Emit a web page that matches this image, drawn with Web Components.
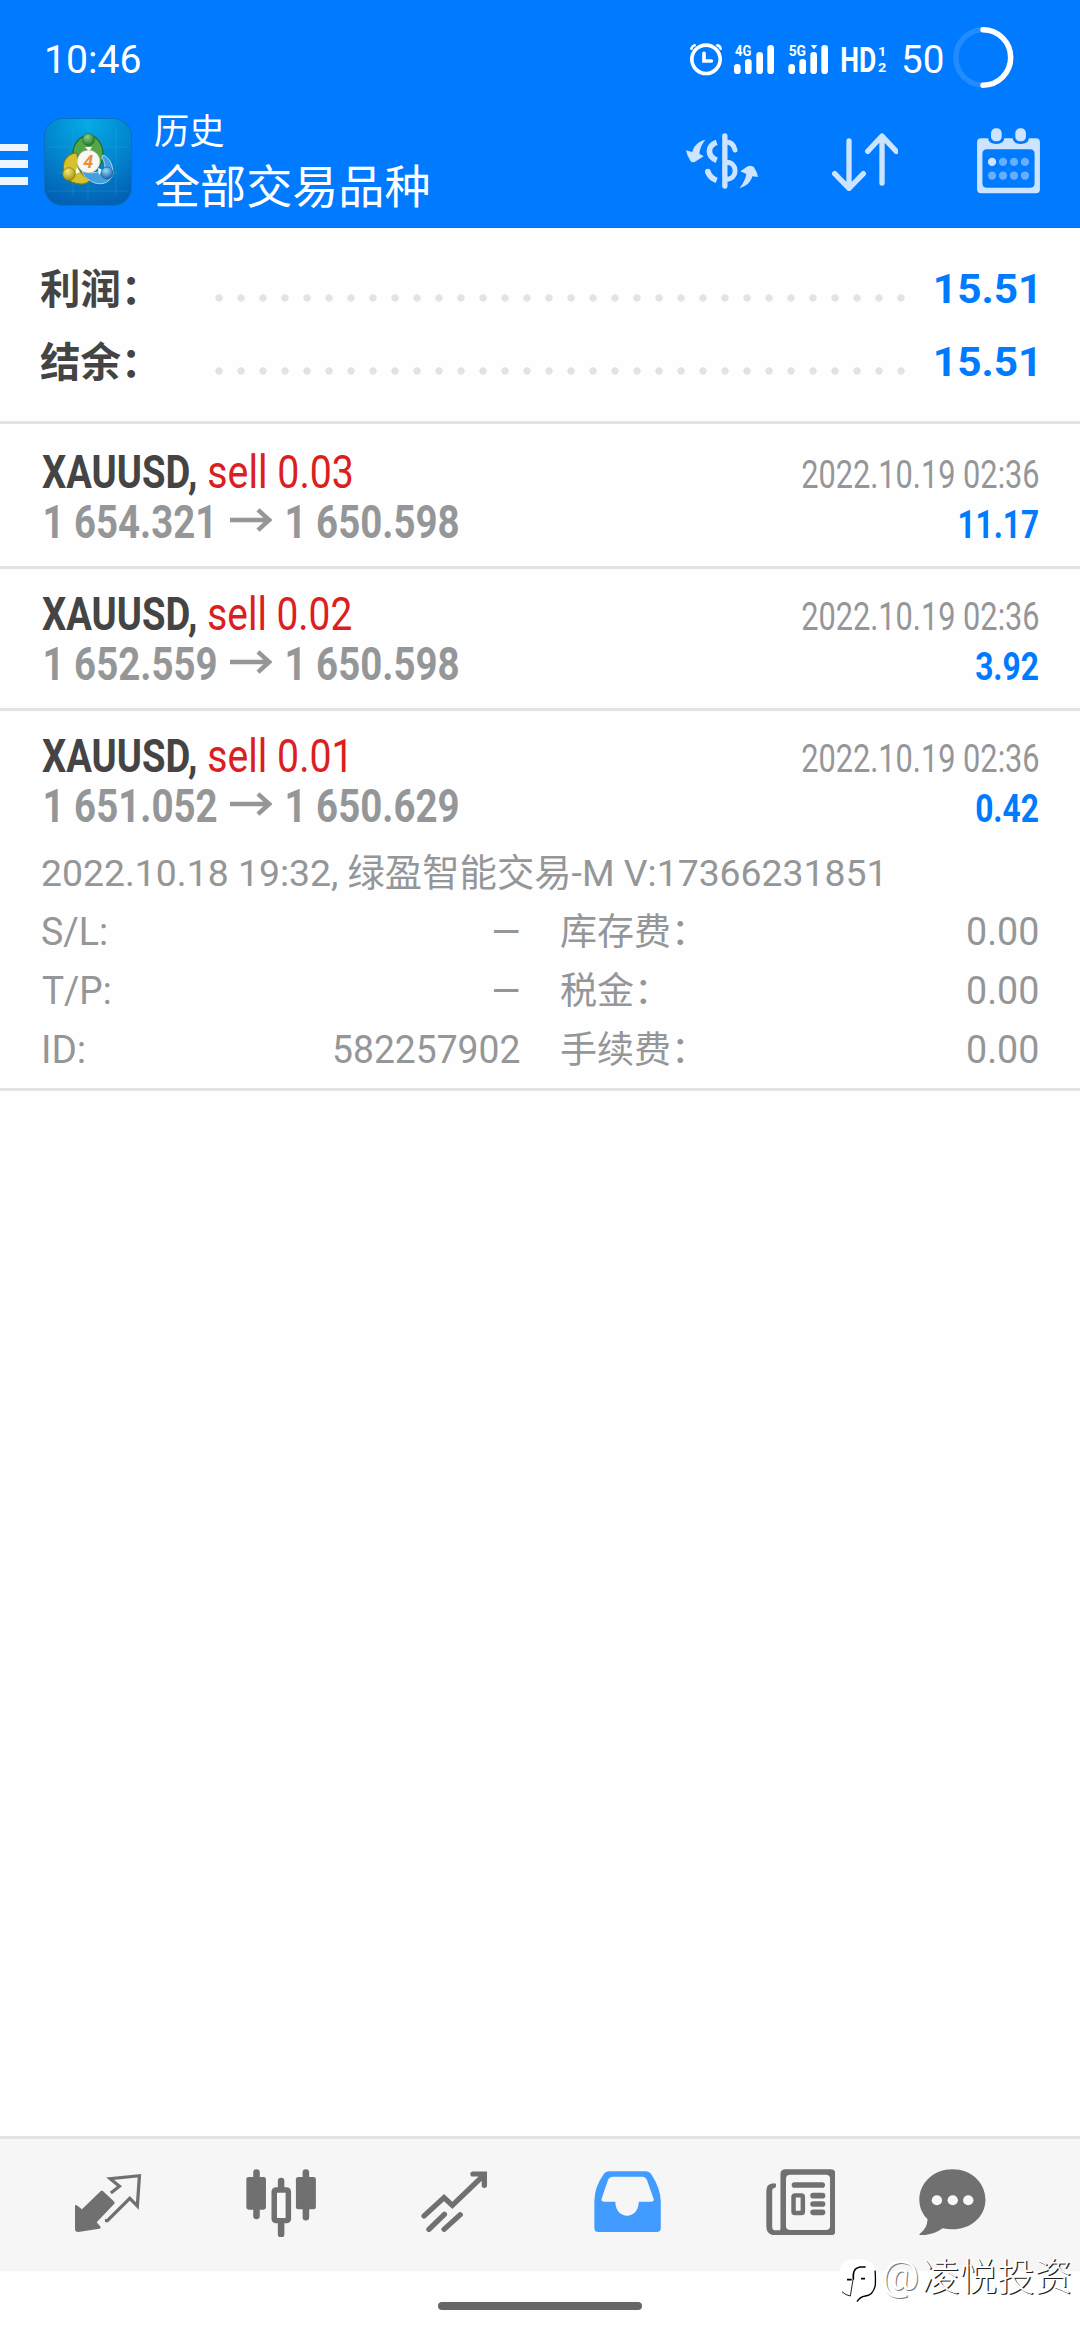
<!DOCTYPE html>
<html lang="zh-CN">
<head>
<meta charset="utf-8">
<title>历史</title>
<style>
html,body{margin:0;padding:0;background:#fefefe}
body{width:1080px;height:2340px;overflow:hidden;font-family:Roboto,"Noto Sans CJK SC",sans-serif}
</style>
</head>
<body>
<history-app></history-app>
<script>
const FAMILY = 'Roboto,"Noto Sans CJK SC",sans-serif';
const ctx = document.createElement('canvas').getContext('2d');

/* One line of text whose inked width is `w` and whose baseline sits `base` px below the box top. */
class FitText extends HTMLElement {
  connectedCallback() {
    if (this.shadowRoot) return;
    const a = n => this.getAttribute(n);
    const size = +a('size'), w = +a('w'), base = +a('base'), h = +a('h'), weight = a('weight') || 400;
    const root = this.attachShadow({mode:'open'});
    root.innerHTML = `<style>
      :host{display:block;flex:none;width:${w}px;height:${h}px}
      div{white-space:pre;font:${weight} ${size}px/${h}px ${FAMILY};width:max-content;transform-origin:0 0}
      i{display:inline-block;width:0;height:0}
    </style><div><slot></slot><i></i></div>`;
    ctx.font = `${weight} ${size}px ${FAMILY}`;
    const m = ctx.measureText(this.textContent);
    const s = w / (m.actualBoundingBoxRight + m.actualBoundingBoxLeft);
    const div = root.querySelector('div');
    const at = root.querySelector('i').getBoundingClientRect().bottom - this.getBoundingClientRect().top;
    div.style.transform = `translate(${m.actualBoundingBoxLeft * s}px,${base - at}px) scaleX(${s})`;
  }
}

class StatusBar extends HTMLElement {
  connectedCallback() {
    this.attachShadow({mode:'open'}).innerHTML = `<style>
      :host{display:flex;height:88px;padding-left:47px;color:#fff;box-sizing:border-box}
      svg{display:block;flex:none;overflow:visible}
      .net{margin:43px 0 0 550px}.pct{margin-left:15.5px}.ring{margin:27px 0 0 10.5px}
    </style>
    <fit-text size="38" w="93" h="88" base="73">10:46</fit-text>
    <svg class="net" width="197" height="33" viewBox="90 129 591 99" fill="#fff">
      <g fill="none" stroke="#fff" stroke-linecap="round">
        <circle cx="138" cy="178" r="42.5" stroke-width="11"/>
        <path d="M132 160V183H154" stroke-width="11"/>
        <path d="M94 146Q97 138 104 136M172 136Q180 138 182 146" stroke-width="8"/>
      </g>
      <text x="225" y="168" font-family="Roboto" font-weight="700" font-size="44" textLength="49" lengthAdjust="spacingAndGlyphs">4G</text>
      <g stroke="#fff" stroke-width="20" stroke-linecap="round">
        <path d="M232 202V212M265 187V212M299 166V212M332 145V212M395 202V212M428 187V212M461 166V212M494 145V212"/>
      </g>
      <text x="386" y="168" font-family="Roboto" font-weight="700" font-size="44" textLength="52" lengthAdjust="spacingAndGlyphs">5G</text>
      <path d="M452 135H472L462 148Z"/>
      <text x="541" y="216" font-family="Roboto" font-weight="700" font-size="105" textLength="108" lengthAdjust="spacingAndGlyphs">HD</text>
      <text x="654" y="167" font-family="Roboto" font-weight="700" font-size="39" textLength="25" lengthAdjust="spacingAndGlyphs">1</text>
      <text x="654" y="216" font-family="Roboto" font-weight="700" font-size="39" textLength="25" lengthAdjust="spacingAndGlyphs">2</text>
    </svg>
    <fit-text class="pct" size="38" w="40" h="88" base="73">50</fit-text>
    <svg class="ring" width="61" height="61" viewBox="0 0 61 61" fill="none" stroke="#fff" stroke-width="5.5">
      <path d="M30.5 2.8A27.7 27.7 0 0 0 30.5 58.2" stroke-opacity=".13"/>
      <path d="M30 2.8A27.7 27.7 0 0 1 30 58.2" stroke-linecap="round"/>
    </svg>`;
  }
}

class ToolBar extends HTMLElement {
  connectedCallback() {
    this.attachShadow({mode:'open'}).innerHTML = `<style>
      :host{display:flex;height:140px;box-sizing:border-box;border-bottom:1px solid #0a70e0;color:#fff}
      svg{display:block;flex:none}
      .menu{display:flex;flex-direction:column;gap:9px;margin:55.5px 16.5px 0 0}
      .menu b{width:27.5px;height:7.7px;background:#ebf4ff}
      .logo{margin:30px 23px 0 0}
      .titles{flex:none;width:531px;padding-top:20px;box-sizing:border-box}
      .d{margin-top:44.5px}.s{margin:44.5px 0 0 73.5px}.c{margin:40px 0 0 78.5px}
    </style>
    <div class="menu"><b></b><b></b><b></b></div>
    <svg class="logo" width="88" height="88" viewBox="0 0 88 88">
      <defs>
        <radialGradient id="bg" cx=".5" cy=".05" r=".95"><stop offset="0" stop-color="#05abe6"/><stop offset=".5" stop-color="#0288cf"/><stop offset="1" stop-color="#0361b4"/></radialGradient>
        <radialGradient id="g" cx=".4" cy=".3" r=".7"><stop offset="0" stop-color="#8fd08a"/><stop offset="1" stop-color="#217a2c"/></radialGradient>
        <radialGradient id="y" cx=".4" cy=".3" r=".7"><stop offset="0" stop-color="#f3ea74"/><stop offset="1" stop-color="#a89410"/></radialGradient>
        <radialGradient id="u" cx=".4" cy=".3" r=".7"><stop offset="0" stop-color="#9fd8fa"/><stop offset="1" stop-color="#1667b0"/></radialGradient>
      </defs>
      <rect x=".5" y=".5" width="87" height="87" rx="18" fill="url(#bg)" stroke="#0a6fc0" stroke-width="1"/>
      <path d="M29 10V78M72 10V78M4 29H84M4 73H84M14 55H74M44 4V84" stroke="#5cc4f4" stroke-opacity=".22" stroke-width=".8"/>
      <path d="M44 18C51 16 59 25 59 36C59 44 57 48 53 50L49 38L44 30L39 37H29C28 26 37 17 44 18Z" fill="#56a648" stroke="#1d6b2a" stroke-width="1.2"/>
      <path d="M33 35L34 44C33 50 37 57 46 62C43 67 35 67 28 64C20 60 17 50 21 42C24 37 28 35 33 35Z" fill="#d5c22d" stroke="#857a0e" stroke-width="1.2"/>
      <path d="M59 37C66 40 69 47 69 56C66 65 58 67 51 65C44 62 39 58 38 53L48 55L60 53C62 48 60 42 58 40Z" fill="#459fdd" stroke="#a5d5f4" stroke-width="1"/>
      <path d="M41 29H48L45 34ZM33 49L36 54L31 56ZM54 50L59 52L55 57Z" fill="#fff"/>
      <circle cx="44.500" cy="21.500" r="6" fill="url(#g)" stroke="#246d2b" stroke-width=".7"/>
      <circle cx="25" cy="56" r="6.300" fill="url(#y)" stroke="#82740e" stroke-width=".7"/>
      <circle cx="63" cy="55" r="6" fill="url(#u)" stroke="#185d9c" stroke-width=".7"/>
      <circle cx="44.500" cy="43.500" r="11.300" fill="#f8f7f3" stroke="#c7c7c0" stroke-width=".6"/>
      <text x="44.300" y="50" text-anchor="middle" font-family="Roboto" font-weight="700" font-style="italic" font-size="18" fill="#ee8c36">4</text>
    </svg>
    <div class="titles">
      <fit-text size="35" w="68.500" h="50" base="35.800">历史</fit-text>
      <fit-text size="46" w="273.500" h="55" base="45.300">全部交易品种</fit-text>
    </div>
    <svg class="d" width="72" height="56" viewBox="18 22 216 168" fill="none" stroke="#cce4ff">
      <path d="M134.500 31V181" stroke-width="16" stroke-linecap="round"/>
      <path d="M140 49Q160 50 165 73" stroke-width="15" stroke-linecap="round"/>
      <path d="M139 110C174 110 174 161 139 161" stroke-width="15"/>
      <path d="M110 50C81 60 81 92 110 104" stroke-width="17"/>
      <path d="M84 139Q90 157 110 164" stroke-width="17"/>
      <circle cx="83.500" cy="138" r="8.500" fill="#cce4ff" stroke="none"/>
      <path d="M76 42C66 54 59 70 58 84L71 92L44 109Q35 112 31 105Q20 88 18 74L37 79C41 61 55 46 76 42ZM178 188C190 174 196 160 199 145L181 137L203 122Q216 117 222 125Q232 140 234 154L217 152C212 170 200 181 178 188Z" fill="#cce4ff" stroke="none"/>
    </svg>
    <svg class="s" width="66.700" height="58" viewBox="515 397 200 174" fill="none" stroke="#cce4ff" stroke-width="16" stroke-linecap="round" stroke-linejoin="round">
      <path d="M566 421V561M523 519L566 563L609 519M665 547V408M622 452L665 406L708 452"/>
    </svg>
    <svg class="c" width="63" height="65.500" viewBox="951 383 189 197">
      <path fill="#cce4ff" fill-rule="evenodd" d="M963 414H984Q986 431 1009 431Q1031 431 1033 414H1058Q1060 431 1083 431Q1105 431 1107 414H1128Q1140 414 1140 426V567Q1140 579 1128 579H963Q951 579 951 567V426Q951 414 963 414ZM981 447Q967 447 967 461V549Q967 563 981 563H1110Q1124 563 1124 549V461Q1124 447 1110 447Z"/>
      <rect x="993" y="384" width="32" height="39" rx="14" fill="#cce4ff"/><rect x="1066" y="384" width="32" height="39" rx="14" fill="#cce4ff"/>
      <circle cx="996" cy="485" r="12.500" fill="#cce4ff"/>
      <g fill="#66afff"><circle cx="1029" cy="485" r="12.500"/><circle cx="1062" cy="485" r="12.500"/><circle cx="1095" cy="485" r="12.500"/><circle cx="996" cy="526" r="12.500"/><circle cx="1029" cy="526" r="12.500"/><circle cx="1062" cy="526" r="12.500"/><circle cx="1095" cy="526" r="12.500"/></g>
    </svg>`;
  }
}

class SummaryRow extends HTMLElement {
  connectedCallback() {
    const a = n => this.getAttribute(n);
    this.attachShadow({mode:'open'}).innerHTML = `<style>
      :host{display:flex;height:73px;padding-left:40px;color:#444}
      .dots{flex:none;width:704px;height:8px;margin:37.700px 0 0 72.700px;background:radial-gradient(circle at 11px 4px,#e3e3e3 3.400px,transparent 4px) 0 0/22px 8px repeat-x}
      .v{color:#007aff;margin-left:23.600px}
    </style>
    <fit-text size="41" weight="700" w="95.700" h="73" base="47.500">${a('label')}</fit-text>
    <div class="dots"></div>
    <fit-text class="v" size="40" weight="700" w="99" h="73" base="47">${a('value')}</fit-text>`;
  }
}

class TradeItem extends HTMLElement {
  connectedCallback() {
    const a = n => this.getAttribute(n);
    this.attachShadow({mode:'open'}).innerHTML = `<style>
      :host{display:block;border-bottom:3px solid #e3e3e3;color:#949698}
      .head{height:139px;box-sizing:border-box;padding:20px 41.500px 0 42px;display:flex;flex-direction:column}
      .r{display:flex;height:50px}
      .sym{color:#444}.side{color:#db1f1f;margin-left:13px}
      .end{margin-left:auto}.profit{color:#007aff}
      .open{margin-left:2.800px}
      .ar{width:42.300px;height:24px;flex:none;margin:11px 0 0 ${185 - a('ow')}px}
      .close{margin-left:15.300px}
    </style>
    <div class="head">
      <div class="r"><fit-text class="sym" size="46" weight="700" w="153.500" h="50" base="40.700">XAUUSD,</fit-text>
        <fit-text class="side" size="46" w="${a('sw')}" h="50" base="40.700">sell ${a('lots')}</fit-text>
        <fit-text class="end" size="38" w="236.500" h="50" base="40.700">2022.10.19 02:36</fit-text></div>
      <div class="r"><fit-text class="open" size="46" weight="700" w="${a('ow')}" h="50" base="40.700">${a('open')}</fit-text>
        <svg class="ar" viewBox="0 0 42.300 24" fill="none" stroke="#949698" stroke-width="4.500"><path d="M0 12H40M28 1.800L39.300 12L28 22.200"/></svg>
        <fit-text class="close" size="46" weight="700" w="171.500" h="50" base="40.700">${a('close')}</fit-text>
        <fit-text class="end profit" size="38" weight="700" w="${a('pw')}" h="50" base="40.700">${a('profit')}</fit-text></div>
    </div><slot></slot>`;
  }
}

class TradeDetails extends HTMLElement {
  connectedCallback() {
    const row = (k, kw, v, vw, k2, k2w) => `<div class="row">
      <div class="l"><fit-text size="38" w="${kw}" h="58" base="36">${k}</fit-text><fit-text size="38" w="${vw}" h="58" base="36">${v}</fit-text></div>
      <div class="l"><fit-text size="37.300" w="${k2w}" h="58" base="36">${k2}</fit-text><fit-text size="38" w="70" h="58" base="36">0.00</fit-text></div></div>`;
    this.attachShadow({mode:'open'}).innerHTML = `<style>
      :host{display:block;height:238px;padding:0 42px;color:#949698}
      .row{display:flex;gap:42.500px;height:58.900px}
      .l{display:flex;justify-content:space-between}
      .l:first-child{width:476.600px}.l:last-child{width:476.500px}
      .row:last-child .l:first-child{padding-left:1.500px;width:475.100px}
    </style>
    <fit-text size="37.500" w="838.500" h="59" base="35.700">2022.10.18 19:32, 绿盈智能交易-M V:17366231851</fit-text>
    ${row('S/L:', 64, '–', 25, '库存费：', 123)}
    ${row('T/P:', 67.5, '–', 25, '税金：', 86)}
    ${row('ID:', 40, '582257902', 185, '手续费：', 123)}`;
  }
}

/* Tab icons, drawn on their own grid: 2.904 units per px across, 3 per px down. */
const ICONS = {
  quotes: [216,160,198,180,`<path d="M219 257Q221 255 224 257L239 269L294 214Q297 211 300 214L333 246Q335 249 333 252L282 308L293 321Q295 326 290 327L228 337Q219 337 219 328Z"/>
    <path d="M323 220L348 200L321 177L406 168L400 259L378 236L313 303H306" fill="none" stroke="#707070" stroke-width="9.500"/>`],
  charts: [714,146,204,206,`<rect x="715" y="170" width="57" height="98" rx="7"/><rect x="859" y="170" width="58" height="97" rx="7"/>
    <path d="M744.500 156V287M888 156V291M816 182V206M816 306V342" stroke="#707070" stroke-width="19" stroke-linecap="round"/>
    <rect x="796" y="209" width="41" height="92" rx="5" fill="#f8f8f8" stroke="#707070" stroke-width="16"/>`],
  trade: [1222,154,193,184,`<path d="M1231 289L1289 234L1313 257L1400 171M1373 163H1406V197M1245 329L1290 284M1289 329L1336 285" fill="none" stroke="#707070" stroke-width="15.500" stroke-linecap="round"/><path d="M1388 170L1406 158V190Z"/>`],
  history: [157,154,195,184,`<path fill="#429bff" fill-rule="evenodd" d="M202 155H308Q317 155 323 163Q350 205 351 245V325Q351 337 339 337H169Q158 337 158 325V245Q158 203 184 165Q191 155 202 155ZM213 171Q202 171 198 180L179 237Q177 246 187 246H219C219 302 287 302 287 246H322Q333 246 330 237L311 182Q307 171 297 171Z"/>`],
  news: [656,146,203,200,`<path fill-rule="evenodd" d="M713 147H844Q858 147 858 161V331Q858 345 844 345H683Q657 345 657 318V210Q657 189 681 189Q686 189 685 196Q685 203 680 203Q674 203 674 211V319Q674 330 684 330H697Q698 326 698 320V161Q698 147 713 147ZM727 163Q714 163 714 175V317Q714 329 727 329H830Q842 329 842 317V175Q842 163 830 163Z"/>
    <path d="M739 194H819M793 226H820M793 251H820M793 276H820" stroke="#707070" stroke-width="17" stroke-linecap="round"/>
    <rect x="736" y="225" width="27" height="53" rx="4" fill="none" stroke="#707070" stroke-width="13"/>`],
  chat: [1102,146,195,200,`<path d="M1199 147C1253 147 1295 187 1295 238C1295 288 1253 327 1199 327Q1184 327 1171 324Q1144 344 1107 345Q1099 344 1107 338Q1125 325 1127 297C1112 281 1103 261 1103 238C1103 187 1146 147 1199 147Z"/>
    <g fill="#f8f8f8"><circle cx="1154" cy="240" r="15"/><circle cx="1200" cy="240" r="15"/><circle cx="1245" cy="240" r="15"/></g>`]
};
class TabIcon extends HTMLElement {
  connectedCallback() {
    const [x, y, w, h, art] = ICONS[this.getAttribute('name')];
    this.attachShadow({mode:'open'}).innerHTML = `<style>
      :host{display:flex;flex:none;width:173px;justify-content:center}
      svg{display:block;margin-top:${(y - 57) / 3}px}
    </style><svg width="${w / 2.904}" height="${h / 3}" viewBox="${x} ${y} ${w} ${h}" preserveAspectRatio="none" fill="#707070">${art}</svg>`;
  }
}
class TabBar extends HTMLElement {
  connectedCallback() {
    this.attachShadow({mode:'open'}).innerHTML = `<style>
      :host{display:flex;height:132px;border-top:3px solid #e3e3e3;background:#f6f6f6;padding-left:22px}
      ::slotted(:last-child){width:131px}
    </style><slot></slot>`;
  }
}
class WaterMark extends HTMLElement {
  connectedCallback() {
    this.attachShadow({mode:'open'}).innerHTML = `<style>
      :host{position:absolute;left:839px;top:2252px;display:flex;color:#fff}
      svg{display:block;margin-top:7px}
      .at{margin-left:3px;text-shadow:1px 1px 0 #777}
      .name{margin-left:5px;text-shadow:1.200px 1.200px 0 #222}
    </style>
    <svg width="41" height="48" viewBox="12 30 123 144" fill="none">
      <path d="M15 60Q18 30 65 30Q122 30 122 70V105Q122 145 82 146L66 160L66 145H45L20 132Z" fill="#fff"/>
      <path d="M92 54H75Q57 57 55 76V92M36 92H50M78 89H90" stroke="#000" stroke-width="5"/>
      <path d="M54 92L46 141Q32 139 21 128" stroke="#222" stroke-width="3"/>
      <path d="M120 65Q122 78 121 108Q115 139 91 141Q75 143 66 158" stroke="#000" stroke-width="4"/>
    </svg>
    <fit-text class="at" size="40" w="35" h="52" base="37.500">@</fit-text>
    <fit-text class="name" size="38" weight="300" w="147" h="52" base="37.700">凌悦投资</fit-text>`;
  }
}

class HistoryApp extends HTMLElement {
  connectedCallback() {
    this.attachShadow({mode:'open'}).innerHTML = `<style>
      :host{display:flex;flex-direction:column;width:1080px;height:2340px;background:#fefefe;position:relative}
      header{background:#007aff;height:228px}
      .sum{height:193px;padding-top:28px;box-sizing:border-box}
      .line{height:3px;background:#e3e3e3;margin-bottom:3px}
      main{flex:1}
      footer{height:69px;display:flex;justify-content:center;align-items:flex-start}
      footer i{width:204px;height:8px;border-radius:4px;background:#666;margin-top:31px}
    </style>
    <header><status-bar></status-bar><tool-bar></tool-bar></header>
    <main>
      <div class="sum"><summary-row label="利润：" value="15.51"></summary-row><summary-row label="结余：" value="15.51"></summary-row></div>
      <div class="line"></div>
      <trade-item lots="0.03" sw="142.500" open="1 654.321" ow="166" close="1 650.598" profit="11.17" pw="78.300"></trade-item>
      <trade-item lots="0.02" sw="142.500" open="1 652.559" ow="171.500" close="1 650.598" profit="3.92" pw="62.300"></trade-item>
      <trade-item lots="0.01" sw="137" open="1 651.052" ow="171.500" close="1 650.629" profit="0.42" pw="62.300"><trade-details></trade-details></trade-item>
    </main>
    <tab-bar><tab-icon name="quotes"></tab-icon><tab-icon name="charts"></tab-icon><tab-icon name="trade"></tab-icon><tab-icon name="history"></tab-icon><tab-icon name="news"></tab-icon><tab-icon name="chat"></tab-icon></tab-bar>
    <footer><i></i></footer>
    <water-mark></water-mark>`;
  }
}
customElements.define('fit-text', FitText);
customElements.define('status-bar', StatusBar);
customElements.define('tool-bar', ToolBar);
customElements.define('summary-row', SummaryRow);
customElements.define('trade-item', TradeItem);
customElements.define('trade-details', TradeDetails);
customElements.define('tab-icon', TabIcon);
customElements.define('tab-bar', TabBar);
customElements.define('water-mark', WaterMark);
customElements.define('history-app', HistoryApp);
</script>
</body>
</html>
